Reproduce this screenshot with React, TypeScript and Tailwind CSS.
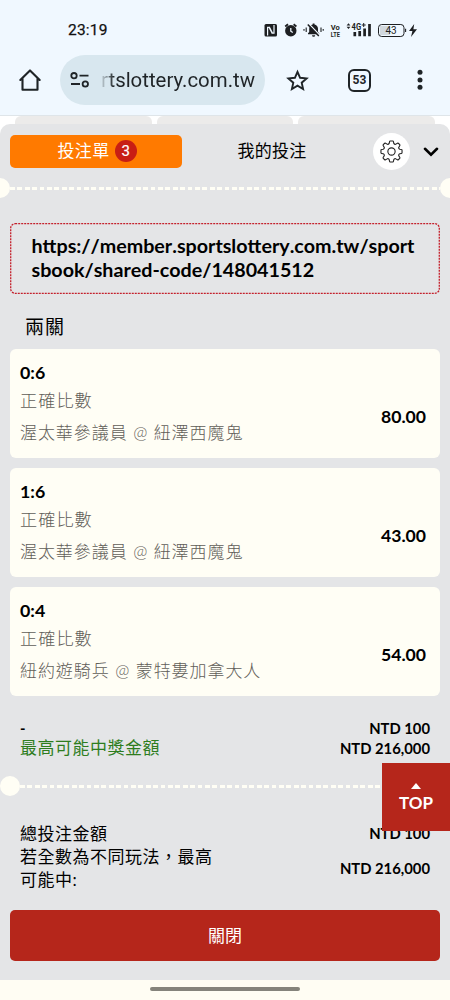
import React from "react"

const bets = [
    { score: "0:6", market: "正確比數", match: "渥太華參議員 @ 紐澤西魔鬼", odds: "80.00" },
    { score: "1:6", market: "正確比數", match: "渥太華參議員 @ 紐澤西魔鬼", odds: "43.00" },
    { score: "0:4", market: "正確比數", match: "紐約遊騎兵 @ 蒙特婁加拿大人", odds: "54.00" },
]

function StatusBar() {
    return (
        <div className="flex h-[50px] items-center pt-[11px] pl-[68px] pr-[32px] font-[Roboto,sans-serif]">
            <span className="text-[15.5px] tracking-[0.2px] text-[#111] [-webkit-text-stroke:0.25px_#111]">23:19</span>
            <svg className="ml-auto" width="154" height="20" viewBox="264 21 154 20" fill="none" stroke="#1d1f22">
                {/* nfc */}
                <rect x="264.5" y="24" width="12.5" height="12.5" rx="1.5" fill="#1d1f22" stroke="none" />
                <path d="M267.6 35.5v-8.2h1.4l3.4 6.4M274 25v8.2h-1.4l-3.4-6.4" stroke="#f0f8ff" strokeWidth="1.2" />
                {/* alarm */}
                <circle cx="290.8" cy="30.8" r="5.7" fill="#1d1f22" stroke="none" />
                <path d="M285.2 26.5l2.8-2.2M296.4 26.5l-2.8-2.2" strokeWidth="1.8" />
                <path d="M290.8 28v3.2l2 1.3" stroke="#f0f8ff" strokeWidth="1.3" />
                {/* muted bell */}
                <path d="M308 34.3v-1l1.2-1.2v-3.3c0-2.3 1.5-3.8 3.5-4.2v-1h1.8v1c2 .4 3.5 1.9 3.5 4.2v3.3l1.2 1.2v1zM312 35.2h3.2a1.6 1.6 0 0 1-3.2 0z" fill="#1d1f22" stroke="none" />
                <path d="M309 24l11 11.5" stroke="#f0f8ff" strokeWidth="1.4" />
                <path d="M307.8 24.6l11 11.5" strokeWidth="1.5" />
                <path d="M306.2 27.5v4.5M304 29v1.8M321 27.5v4.5M323.2 29v1.8" strokeWidth="1.1" />
                {/* volte */}
                <text transform="translate(330.8 29.8) scale(0.97 1)" fontSize="7.8" fontWeight="700" fill="#1d1f22" stroke="none">Vo</text>
                <text transform="translate(330.8 36.6) scale(0.72 1)" fontSize="7.8" fontWeight="700" fill="#1d1f22" stroke="none">LTE</text>
                {/* signal */}
                <path d="M346.6 25.6l1.9-2.4 1.9 2.4zM346.6 26.8l1.9 2.2 1.9-2.2z" fill="#1d1f22" stroke="none" />
                <text transform="translate(351.6 29.6) scale(0.86 1)" fontSize="8.8" fontWeight="700" fill="#1d1f22" stroke="none">4G</text>
                <path d="M361.7 25h4M363.7 23v4" strokeWidth="1" />
                <path d="M354.8 32v4.3M359.7 31v5.3M364.6 28.5v7.8M369.5 24v12.3" strokeWidth="2.7" />
                {/* battery */}
                <rect x="378.5" y="24.5" width="25.5" height="12" rx="3.2" strokeWidth="1" />
                <path d="M380 26h10v9h-10z" fill="#d1d8de" stroke="none" />
                <path d="M405.6 28.7v3.4" strokeWidth="1.1" />
                <text x="391" y="34" fontSize="10" textAnchor="middle" fill="#1d1f22" stroke="none">43</text>
                <path d="M414.2 24l-5.2 7h3.4l-1.4 6 6-7.8h-3.6z" fill="#1d1f22" stroke="none" />
            </svg>
        </div>
    )
}

function BrowserBar() {
    return (
        <div className="flex h-[60px] items-center text-[#1f2427]">
            <svg className="ml-[18px] shrink-0" width="24" height="24" viewBox="0 0 24 24" fill="none" stroke="currentColor" strokeWidth="2.1">
                <path d="M2.3 12L12 2.4l9.7 9.6M4.5 10.5v11.2h15V10.5" strokeLinejoin="round" strokeLinecap="round" />
            </svg>
            <div className="ml-[18px] flex h-[50px] w-[205px] shrink-0 items-center rounded-full bg-[#d8e7ef]">
                <svg className="ml-[10px] shrink-0" width="20" height="18" viewBox="0 0 20 18" fill="none" stroke="currentColor" strokeWidth="1.8">
                    <circle cx="4" cy="4.7" r="2.7" />
                    <path d="M9.5 4.7h9M1 13h9" />
                    <circle cx="15.3" cy="13" r="2.7" />
                </svg>
                <div className="ml-[10px] flex w-[155px] justify-end overflow-hidden [mask-image:linear-gradient(to_right,transparent,black_14px)]">
                    <span className="font-[Roboto,sans-serif] text-[20.4px] whitespace-nowrap">ortslottery.com.tw</span>
                </div>
            </div>
            <svg className="ml-[20px] shrink-0" width="24" height="24" viewBox="0 0 24 24" fill="none" stroke="currentColor" strokeWidth="1.9">
                <path d="M12.5 3.8l2.6 6 6.5.6-4.9 4.3 1.4 6.3-5.6-3.3-5.6 3.3 1.4-6.3-4.9-4.3 6.5-.6z" />
            </svg>
            <div className="ml-[39px] flex size-[23px] shrink-0 items-center justify-center rounded-[6px] border-2 border-[#1f2427] font-[Roboto,sans-serif] text-[12px] font-bold">53</div>
            <svg className="ml-[45px] shrink-0" width="8" height="24" viewBox="0 0 8 24" fill="currentColor">
                <circle cx="4" cy="4.3" r="2.5" />
                <circle cx="4" cy="12" r="2.5" />
                <circle cx="4" cy="19.3" r="2.5" />
            </svg>
        </div>
    )
}

function DashedLine() {
    return (
        <div className="h-[3px] min-w-0 flex-1 bg-[repeating-linear-gradient(to_right,#fffef5_0_4.8px,transparent_4.8px_7.4px)]" />
    )
}

function GearIcon() {
    return (
        <svg width="23" height="23" viewBox="0 0 24 24" fill="none" stroke="#222" strokeWidth="1.15" strokeLinejoin="round">
            <path d="M10.6 1h2.8q.5 0 .6.6l.4 1.8q.2.7.9 1 .7.3 1.3-.1l1.6-1q.5-.3.9.1l1.5 1.5q.4.4.1.9l-1 1.6q-.4.6-.1 1.3.3.7 1 .9l1.8.4q.6.1.6.6v2.8q0 .5-.6.6l-1.8.4q-.7.2-1 .9-.3.7.1 1.3l1 1.6q.3.5-.1.9l-1.5 1.5q-.4.4-.9.1l-1.6-1q-.6-.4-1.3-.1-.7.3-.9 1l-.4 1.8q-.1.6-.6.6h-2.8q-.5 0-.6-.6l-.4-1.8q-.2-.7-.9-1-.7-.3-1.3.1l-1.6 1q-.5.3-.9-.1l-1.5-1.5q-.4-.4-.1-.9l1-1.6q.4-.6.1-1.3-.3-.7-1-.9l-1.8-.4q-.6-.1-.6-.6v-2.8q0-.5.6-.6l1.8-.4q.7-.2 1-.9.3-.7-.1-1.3l-1-1.6q-.3-.5.1-.9l1.5-1.5q.4-.4.9-.1l1.6 1q.6.4 1.3.1.7-.3.9-1l.4-1.8q.1-.6.6-.6z" />
            <circle cx="12" cy="12" r="3.8" />
        </svg>
    )
}

export default function App() {
    return (
        <div className="relative flex h-[1000px] w-[450px] flex-col overflow-hidden bg-[#e4e5e7] font-[Lato,'Noto_Sans_CJK_TC',sans-serif] text-black">
            <header className="h-[115px] shrink-0 bg-[#f0f8ff]">
                <StatusBar />
                <BrowserBar />
            </header>

            {/* page tabs peeking out above the bet slip */}
            <div className="flex h-[20px] shrink-0 gap-[5px] border-t border-[#dfe5e9] bg-white px-[15px]">
                <div className="flex-1 rounded-t-md bg-[#ecebea]" />
                <div className="flex-1 rounded-t-md bg-[#ecebea]" />
                <div className="flex-1 rounded-t-md bg-[#ecebea]" />
            </div>

            <main className="relative -mt-[11px] flex h-[856px] shrink-0 flex-col rounded-t-[10px] bg-[#e4e5e7]">
                <div className="flex h-[54px] shrink-0 items-center px-[10px]">
                    <button className="flex h-[33px] w-[172px] items-center justify-center gap-[5px] rounded-[5px] bg-[#ff7a00] pl-[2px] text-[17px] tracking-[0.4px] text-white">
                        投注單
                        <span className="flex size-[22px] items-center justify-center rounded-full bg-[#c81e14] font-[Roboto,sans-serif] text-[15px] tracking-normal [-webkit-text-stroke:0.2px_white]">3</span>
                    </button>
                    <button className="ml-[4px] w-[172px] text-[17px] tracking-[0.3px]">我的投注</button>
                    <button className="ml-[15px] flex size-[37px] items-center justify-center rounded-full bg-white">
                        <GearIcon />
                    </button>
                    <svg className="ml-[12.5px] mt-[2px]" width="16" height="10" viewBox="0 0 16 10" fill="none" stroke="#000" strokeWidth="2.6">
                        <path d="M2 1.8L8 7.6l6-5.8" strokeLinecap="round" />
                    </svg>
                </div>

                <div className="-mx-[10px] flex h-[20px] shrink-0 items-center">
                    <div className="size-5 rounded-full bg-[#fffef5]" />
                    <DashedLine />
                    <div className="size-5 rounded-full bg-[#fffef5]" />
                </div>

                <div className="relative mx-[10px] mt-[25px] h-[71px] shrink-0 px-[21.5px] pt-[11px] text-[19.7px] leading-[24px] font-bold whitespace-nowrap [font-kerning:none]">
                    <svg className="absolute inset-0" width="430" height="71" fill="none">
                        <rect x="0.7" y="0.7" width="428.6" height="69.6" rx="4.5" stroke="#c4202c" strokeWidth="1.3" strokeDasharray="2 1" />
                    </svg>
                    https://member.sportslottery.com.tw/sport
                    <br />
                    sbook/shared-code/148041512
                </div>

                <h2 className="mt-[19px] ml-[25px] h-[28px] shrink-0 text-[19px] leading-[28px] tracking-[0.9px]">兩關</h2>

                <div className="mx-[10px] mt-[8px] flex shrink-0 flex-col gap-[10px]">
                    {bets.map((bet) => (
                        <div key={bet.score} className="flex h-[109px] rounded-[6px] bg-[#fffef5] pr-[14px] pl-[10px]">
                            <div className="flex-1 text-[17px] text-[#5f5d58]">
                                <p className="mt-[11px] h-[24px] text-[17.8px] leading-[24px] font-bold text-black">{bet.score}</p>
                                <p className="mt-[4px] h-[26px] text-[17.2px] leading-[26px] font-light tracking-[1px]">{bet.market}</p>
                                <p className="mt-[6px] h-[26px] leading-[26px] font-light tracking-[0.93px]">{bet.match}</p>
                            </div>
                            <span className="mt-[56px] text-[17.6px] leading-[24px] font-bold">{bet.odds}</span>
                        </div>
                    ))}
                </div>

                <div className="mt-[22px] flex h-[40px] shrink-0 justify-between px-[20px] text-[14.8px] leading-[20px] font-bold">
                    <div>
                        <p>-</p>
                        <p className="text-[17px] font-normal tracking-[0.5px] text-[#2e7d1e]">最高可能中獎金額</p>
                    </div>
                    <div className="text-right">
                        <p>NTD 100</p>
                        <p>NTD 216,000</p>
                    </div>
                </div>

                <div className="mt-[18px] flex h-[20px] shrink-0 items-center">
                    <div className="size-5 rounded-full bg-[#fffef5]" />
                    <DashedLine />
                </div>

                <div className="mt-[26px] flex shrink-0 flex-col px-[20px] text-[17px] leading-[23px]">
                    <div className="flex justify-between">
                        <span className="tracking-[0.5px]">總投注金額</span>
                        <span className="text-[14.8px] font-bold">NTD 100</span>
                    </div>
                    <div className="flex items-center justify-between">
                        <p className="w-[200px] tracking-[0.5px]">若全數為不同玩法，最高可能中:</p>
                        <span className="text-[14.8px] font-bold">NTD 216,000</span>
                    </div>
                </div>

                <button className="mx-[10px] mt-[19px] h-[51px] shrink-0 rounded-[5px] bg-[#b5261b] text-[17px] text-white">關閉</button>
            </main>

            <div className="flex flex-1 justify-center bg-[#fffdf3] pt-[7px]">
                <div className="h-[4px] w-[150px] rounded-full bg-[#85837b]" />
            </div>

            {/* back to top */}
            <button className="absolute top-[763px] right-0 flex h-[68px] w-[68px] flex-col items-center bg-[#b5261b] pt-[20px] text-white">
                <svg width="10" height="6" viewBox="0 0 10 6" fill="currentColor">
                    <path d="M5 0l5 6H0z" />
                </svg>
                <span className="mt-[2px] text-[17px] leading-[24px] font-bold">TOP</span>
            </button>
        </div>
    )
}
